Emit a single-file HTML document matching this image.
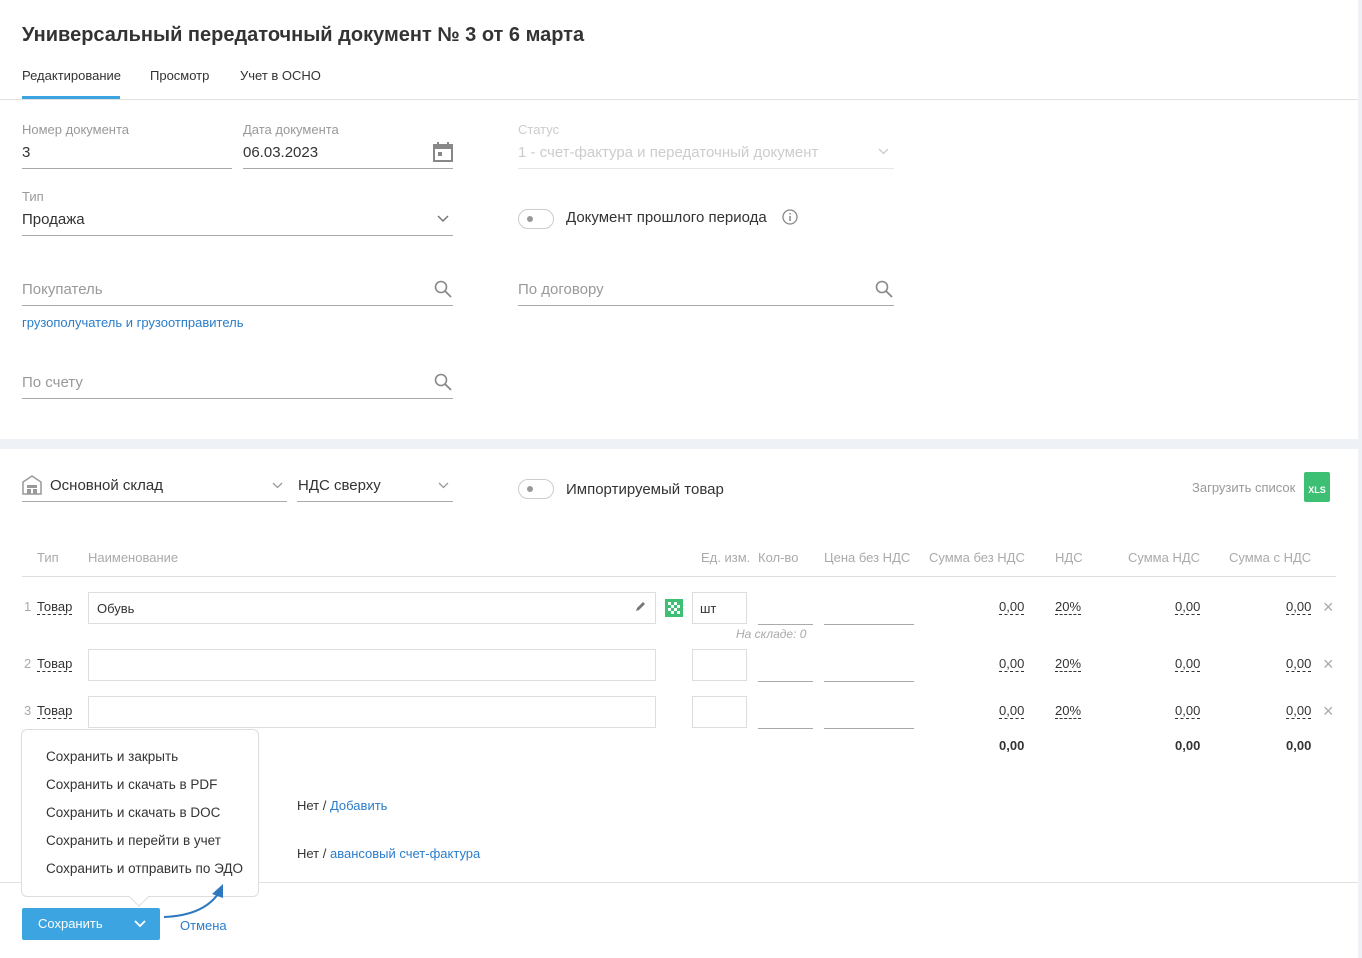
<!DOCTYPE html>
<html><head><meta charset="utf-8">
<style>
*{box-sizing:border-box;margin:0;padding:0}
body{width:1362px;height:958px;position:relative;overflow:hidden;background:#fff;font-family:"Liberation Sans",sans-serif;color:#333;}
.a{position:absolute;white-space:nowrap}
.lbl{font-size:13px;color:#999}
.val{font-size:15px;color:#333}
.ph{font-size:15px;color:#999}
.ul{position:absolute;height:1px;background:#aaa}
.hdr{font-size:13px;color:#aaa}
.box{position:absolute;border:1px solid #ddd;background:#fff}
.dash{border-bottom:1px dashed #333;font-size:13px;color:#333}
.num{font-size:13px;color:#333}
.x{font-size:18px;color:#aaa}
.link{color:#2a7dc9}
.tg{position:absolute;width:36px;height:20px;border:1px solid #ccc;border-radius:10px;background:#fff}
.tg:after{content:"";position:absolute;left:8px;top:6px;width:6px;height:6px;border-radius:50%;background:#999}
.mi{font-size:13.5px;color:#333;left:46px}
</style></head><body>
<div class="a" style="left:1358px;top:0;width:4px;height:958px;background:#eef1f5"></div>
<div class="a" style="left:22px;top:24px;font-size:20px;font-weight:bold;color:#333">Универсальный передаточный документ № 3 от 6 марта</div>
<div class="a" style="left:22px;top:68px;font-size:13px">Редактирование</div>
<div class="a" style="left:150px;top:68px;font-size:13px">Просмотр</div>
<div class="a" style="left:240px;top:68px;font-size:13px">Учет в ОСНО</div>
<div class="a" style="left:22px;top:96px;width:98px;height:3px;background:#3ca4e0"></div>
<div class="a" style="left:0;top:99px;width:1358px;height:1px;background:#e0e0e0"></div>

<div class="a lbl" style="left:22px;top:122px">Номер документа</div>
<div class="a val" style="left:22px;top:144px">3</div>
<div class="ul" style="left:22px;top:168px;width:210px"></div>
<div class="a lbl" style="left:243px;top:122px">Дата документа</div>
<div class="a val" style="left:243px;top:144px">06.03.2023</div>
<svg class="a" style="left:433px;top:142px" width="20" height="20" viewBox="0 0 20 20"><rect x="1" y="3" width="18" height="16" fill="none" stroke="#888" stroke-width="2"/><rect x="1" y="3" width="18" height="4" fill="#888"/><rect x="4" y="0" width="2" height="4" fill="#888"/><rect x="14" y="0" width="2" height="4" fill="#888"/><rect x="5" y="10" width="4" height="4" fill="#888"/></svg>
<div class="ul" style="left:243px;top:168px;width:210px"></div>
<div class="a lbl" style="left:518px;top:122px;color:#ccc">Статус</div>
<div class="a ph" style="left:518px;top:144px;color:#ccc">1 - счет-фактура и передаточный документ</div>
<svg class="a" style="left:878px;top:148px" width="11" height="7"><path d="M1 1l4.5 4.5L10 1" fill="none" stroke="#ccc" stroke-width="1.3"/></svg>
<div class="ul" style="left:518px;top:168px;width:376px;background:#e5e5e5"></div>

<div class="a lbl" style="left:22px;top:189px">Тип</div>
<div class="a val" style="left:22px;top:211px">Продажа</div>
<svg class="a" style="left:437px;top:215px" width="12" height="8"><path d="M1 1l5 5 5-5" fill="none" stroke="#777" stroke-width="1.5"/></svg>
<div class="ul" style="left:22px;top:235px;width:431px"></div>
<div class="tg" style="left:518px;top:209px"></div>
<div class="a val" style="left:566px;top:209px">Документ прошлого периода</div>
<svg class="a" style="left:782px;top:209px" width="16" height="16"><circle cx="8" cy="8" r="7" fill="none" stroke="#888" stroke-width="1.3"/><rect x="7.3" y="7" width="1.5" height="5" fill="#888"/><rect x="7.3" y="4" width="1.5" height="1.5" fill="#888"/></svg>

<div class="a ph" style="left:22px;top:281px">Покупатель</div>
<svg class="a" style="left:434px;top:280px" width="18" height="18"><circle cx="7" cy="7" r="5.5" fill="none" stroke="#888" stroke-width="1.6"/><path d="M11 11l6 6" stroke="#888" stroke-width="1.8"/></svg>
<div class="ul" style="left:22px;top:305px;width:431px"></div>
<div class="a ph" style="left:518px;top:281px">По договору</div>
<svg class="a" style="left:875px;top:280px" width="18" height="18"><circle cx="7" cy="7" r="5.5" fill="none" stroke="#888" stroke-width="1.6"/><path d="M11 11l6 6" stroke="#888" stroke-width="1.8"/></svg>
<div class="ul" style="left:518px;top:305px;width:376px"></div>
<div class="a link" style="left:22px;top:315px;font-size:13px">грузополучатель и грузоотправитель</div>

<div class="a ph" style="left:22px;top:374px">По счету</div>
<svg class="a" style="left:434px;top:373px" width="18" height="18"><circle cx="7" cy="7" r="5.5" fill="none" stroke="#888" stroke-width="1.6"/><path d="M11 11l6 6" stroke="#888" stroke-width="1.8"/></svg>
<div class="ul" style="left:22px;top:398px;width:431px"></div>

<div class="a" style="left:0;top:439px;width:1358px;height:10px;background:#eef1f5"></div>

<svg class="a" style="left:22px;top:475px" width="20" height="20"><path d="M1 7L10 1l9 6v12H1z" fill="none" stroke="#999" stroke-width="1.5"/><rect x="5" y="10" width="10" height="3" fill="#999"/><rect x="5" y="14" width="4" height="5" fill="#999"/><rect x="11" y="14" width="4" height="5" fill="#999"/></svg>
<div class="a val" style="left:50px;top:477px">Основной склад</div>
<svg class="a" style="left:272px;top:482px" width="11" height="7"><path d="M1 1l4.5 4.5L10 1" fill="none" stroke="#999" stroke-width="1.3"/></svg>
<div class="ul" style="left:22px;top:501px;width:265px"></div>
<div class="a val" style="left:298px;top:477px">НДС сверху</div>
<svg class="a" style="left:438px;top:482px" width="11" height="7"><path d="M1 1l4.5 4.5L10 1" fill="none" stroke="#999" stroke-width="1.3"/></svg>
<div class="ul" style="left:297px;top:501px;width:156px"></div>
<div class="tg" style="left:518px;top:479px"></div>
<div class="a val" style="left:566px;top:481px">Импортируемый товар</div>
<div class="a" style="left:1192px;top:480px;font-size:13px;color:#999">Загрузить список</div>
<div class="a" style="left:1304px;top:472px;width:26px;height:30px;background:#3dbf74;border-radius:2px;color:#fff;font-size:9px;font-weight:bold;text-align:center;padding-top:13px">XLS</div>

<div class="a hdr" style="left:37px;top:550px">Тип</div>
<div class="a hdr" style="left:88px;top:550px">Наименование</div>
<div class="a hdr" style="left:701px;top:550px">Ед. изм.</div>
<div class="a hdr" style="left:758px;top:550px">Кол-во</div>
<div class="a hdr" style="left:824px;top:550px">Цена без НДС</div>
<div class="a hdr" style="left:929px;top:550px">Сумма без НДС</div>
<div class="a hdr" style="left:1055px;top:550px">НДС</div>
<div class="a hdr" style="left:1128px;top:550px">Сумма НДС</div>
<div class="a hdr" style="left:1229px;top:550px">Сумма с НДС</div>
<div class="a" style="left:22px;top:576px;width:1314px;height:1px;background:#ddd"></div>

<!-- row1 -->
<div class="a" style="left:24px;top:599px;font-size:13px;color:#aaa">1</div>
<div class="a dash" style="left:37px;top:599px">Товар</div>
<div class="box" style="left:88px;top:592px;width:568px;height:32px"></div>
<div class="a" style="left:97px;top:601px;font-size:13px">Обувь</div>
<svg class="a" style="left:634px;top:601px" width="12" height="12"><path d="M2 10l1-3 6-6 2 2-6 6z" fill="#777"/></svg>
<svg class="a" style="left:665px;top:599px" width="18" height="18"><rect width="18" height="18" fill="#3dbf74"/><path d="M3 3h3v3H3zM9 3h3v3H9zM6 6h3v3H6zM12 6h3v3h-3zM3 9h3v3H3zM9 9h3v3H9zM6 12h3v3H6zM12 12h3v3h-3z" fill="#fff"/></svg>
<div class="box" style="left:692px;top:592px;width:55px;height:32px"></div>
<div class="a" style="left:700px;top:601px;font-size:13px">шт</div>
<div class="ul" style="left:758px;top:624px;width:55px"></div>
<div class="ul" style="left:824px;top:624px;width:90px"></div>
<div class="a" style="left:736px;top:627px;font-size:12px;color:#aaa;font-style:italic">На складе: 0</div>
<div class="a dash" style="left:999px;top:599px">0,00</div>
<div class="a dash" style="left:1055px;top:599px">20%</div>
<div class="a dash" style="left:1175px;top:599px">0,00</div>
<div class="a dash" style="left:1286px;top:599px">0,00</div>
<div class="a x" style="left:1323px;top:597px">×</div>
<!-- row2 -->
<div class="a" style="left:24px;top:656px;font-size:13px;color:#aaa">2</div>
<div class="a dash" style="left:37px;top:656px">Товар</div>
<div class="box" style="left:88px;top:649px;width:568px;height:32px"></div>
<div class="box" style="left:692px;top:649px;width:55px;height:32px"></div>
<div class="ul" style="left:758px;top:681px;width:55px"></div>
<div class="ul" style="left:824px;top:681px;width:90px"></div>
<div class="a dash" style="left:999px;top:656px">0,00</div>
<div class="a dash" style="left:1055px;top:656px">20%</div>
<div class="a dash" style="left:1175px;top:656px">0,00</div>
<div class="a dash" style="left:1286px;top:656px">0,00</div>
<div class="a x" style="left:1323px;top:654px">×</div>
<!-- row3 -->
<div class="a" style="left:24px;top:703px;font-size:13px;color:#aaa">3</div>
<div class="a dash" style="left:37px;top:703px">Товар</div>
<div class="box" style="left:88px;top:696px;width:568px;height:32px"></div>
<div class="box" style="left:692px;top:696px;width:55px;height:32px"></div>
<div class="ul" style="left:758px;top:728px;width:55px"></div>
<div class="ul" style="left:824px;top:728px;width:90px"></div>
<div class="a dash" style="left:999px;top:703px">0,00</div>
<div class="a dash" style="left:1055px;top:703px">20%</div>
<div class="a dash" style="left:1175px;top:703px">0,00</div>
<div class="a dash" style="left:1286px;top:703px">0,00</div>
<div class="a x" style="left:1323px;top:701px">×</div>
<div class="a num" style="left:999px;top:738px;font-weight:bold">0,00</div>
<div class="a num" style="left:1175px;top:738px;font-weight:bold">0,00</div>
<div class="a num" style="left:1286px;top:738px;font-weight:bold">0,00</div>

<div class="a" style="left:297px;top:798px;font-size:13px">Нет / <span class="link">Добавить</span></div>
<div class="a" style="left:297px;top:846px;font-size:13px">Нет / <span class="link">авансовый счет-фактура</span></div>
<div class="a" style="left:0;top:882px;width:1358px;height:1px;background:#e0e0e0"></div>

<!-- dropdown -->
<div class="a" style="left:21px;top:729px;width:238px;height:168px;border:1px solid #ddd;border-radius:6px;background:#fff"></div>
<div class="a" style="left:132px;top:890px;width:14px;height:14px;background:#fff;border-right:1px solid #ddd;border-bottom:1px solid #ddd;transform:rotate(45deg)"></div>
<div class="a mi" style="top:749px">Сохранить и закрыть</div>
<div class="a mi" style="top:777px">Сохранить и скачать в PDF</div>
<div class="a mi" style="top:805px">Сохранить и скачать в DOC</div>
<div class="a mi" style="top:833px">Сохранить и перейти в учет</div>
<div class="a mi" style="top:861px">Сохранить и отправить по ЭДО</div>

<div class="a" style="left:22px;top:908px;width:138px;height:32px;background:#3ca4e0;border-radius:2px"></div>
<div class="a" style="left:38px;top:916px;font-size:13px;color:#fff">Сохранить</div>
<svg class="a" style="left:134px;top:920px" width="12" height="8"><path d="M1 1l5 5 5-5" fill="none" stroke="#fff" stroke-width="1.8"/></svg>
<div class="a link" style="left:180px;top:918px;font-size:13px">Отмена</div>
<svg class="a" style="left:160px;top:880px" width="70" height="40"><path d="M4 37C30 36 48 28 58 14" fill="none" stroke="#2f78c0" stroke-width="2"/><path d="M63 4L52 14l11 4z" fill="#2f78c0"/></svg>
</body></html>
